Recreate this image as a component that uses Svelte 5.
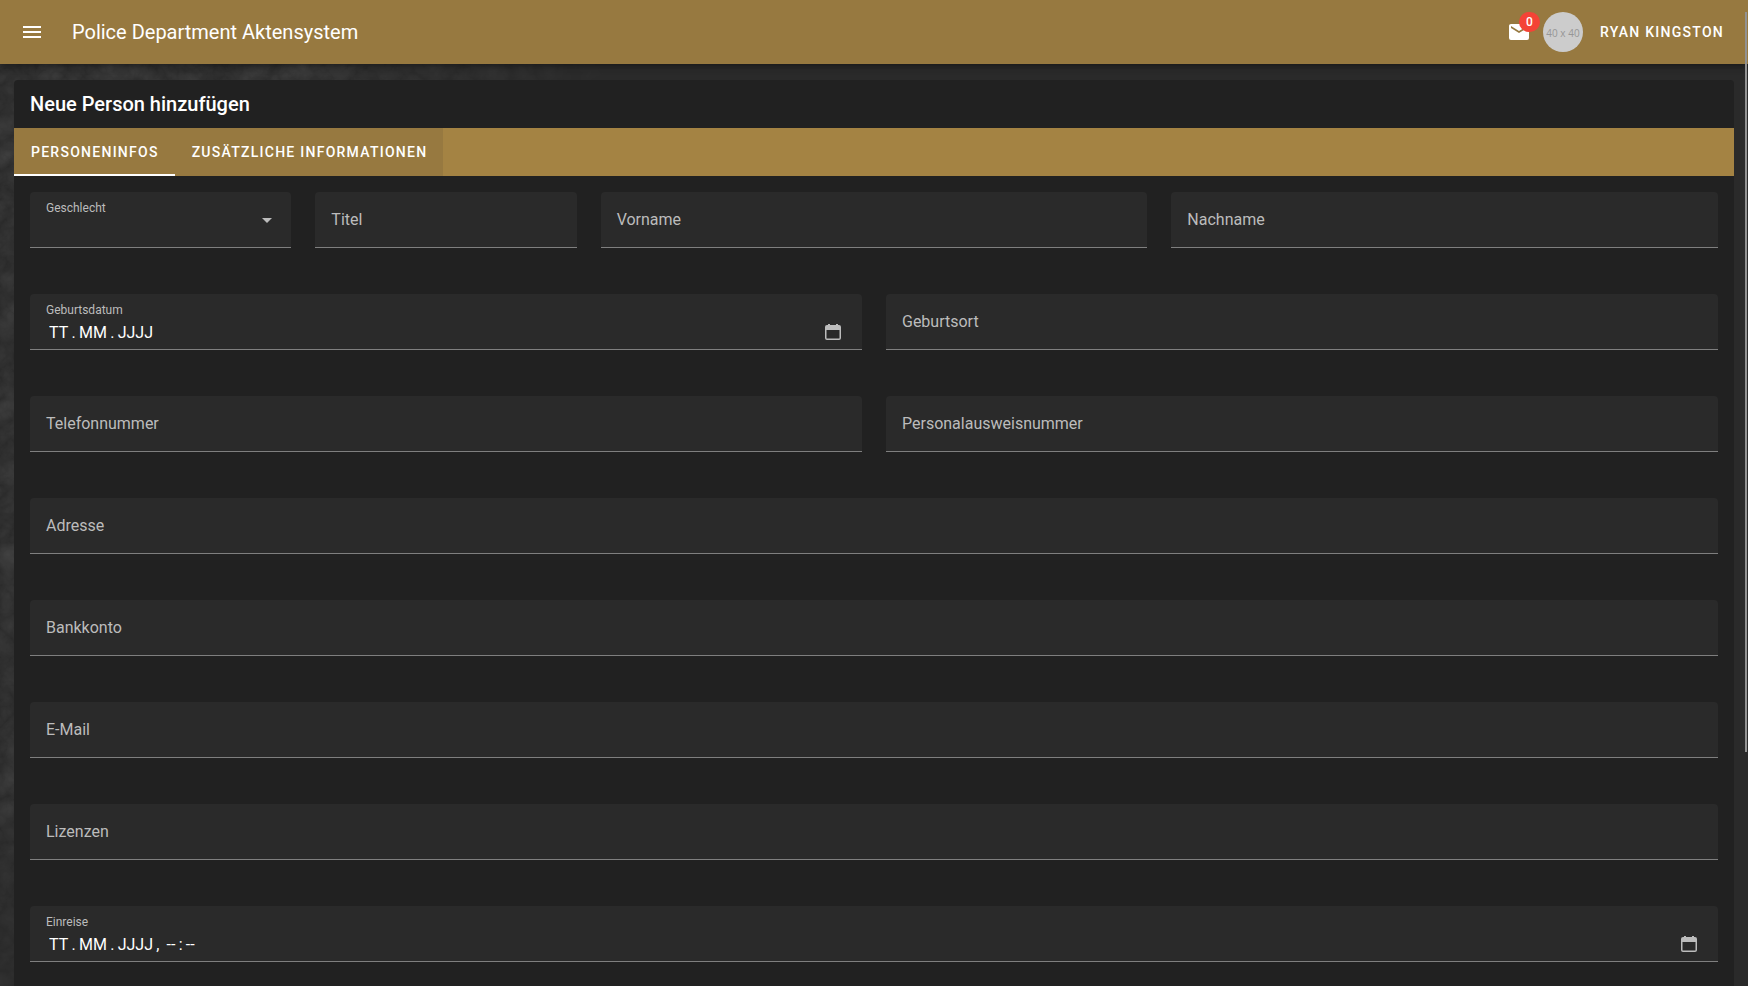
<script lang="ts">
    const tabs = ["Personeninfos", "Zusätzliche Informationen"];
    let activeTab = $state(0);
    let unread = $state(0);

    const fields = [
        { id: "gender", label: "Geschlecht", type: "select", size: "small" },
        { id: "title", label: "Titel", type: "text", size: "small" },
        { id: "firstname", label: "Vorname", type: "text", size: "medium" },
        { id: "lastname", label: "Nachname", type: "text", size: "medium" },
        { id: "birthdate", label: "Geburtsdatum", type: "date", size: "half", value: "TT\u2009.\u2009MM\u2009.\u2009JJJJ" },
        { id: "birthplace", label: "Geburtsort", type: "text", size: "half" },
        { id: "phone", label: "Telefonnummer", type: "text", size: "half" },
        { id: "idcard", label: "Personalausweisnummer", type: "text", size: "half" },
        { id: "address", label: "Adresse", type: "text", size: "full" },
        { id: "bank", label: "Bankkonto", type: "text", size: "full" },
        { id: "email", label: "E-Mail", type: "text", size: "full" },
        { id: "licenses", label: "Lizenzen", type: "text", size: "full" },
        { id: "entry", label: "Einreise", type: "date", size: "full", value: "TT\u2009.\u2009MM\u2009.\u2009JJJJ\u2009, \u2009--\u2009:\u2009--" },
    ];
</script>

<div class="app">
    <svg class="texture" aria-hidden="true">
        <defs>
            <filter id="grain" x="0" y="0" width="100%" height="100%">
                <feTurbulence type="turbulence" baseFrequency="0.035" numOctaves="4" seed="8" />
                <feColorMatrix values="0 0 0 0 1  0 0 0 0 1  0 0 0 0 1  0.12 0 0 0 0" />
            </filter>
            <radialGradient id="fade" cx="0" cy="0.3" r="1">
                <stop offset="0.4" stop-color="#fff" />
                <stop offset="0.95" stop-color="#000" />
            </radialGradient>
            <mask id="corner">
                <rect width="100%" height="100%" fill="url(#fade)" />
            </mask>
        </defs>
        <g mask="url(#corner)">
            <rect width="100%" height="100%" filter="url(#grain)" />
        </g>
    </svg>

    <header>
        <button class="icon-button" aria-label="Menü">
            <svg width="24" height="24" viewBox="0 0 24 24"><path d="M3,6H21V8H3V6M3,11H21V13H3V11M3,16H21V18H3V16Z" /></svg>
        </button>
        <div class="brand">Police Department Aktensystem</div>
        <button class="mail" aria-label="Nachrichten">
            <svg width="24" height="24" viewBox="0 0 24 24"><path d="M20,8L12,13L4,8V6L12,11L20,6M20,4H4C2.89,4 2,4.89 2,6V18A2,2 0 0,0 4,20H20A2,2 0 0,0 22,18V6C22,4.89 21.1,4 20,4Z" /></svg>
            <span class="badge">{unread}</span>
        </button>
        <div class="avatar">40 x 40</div>
        <button class="user">Ryan Kingston</button>
    </header>

    <main>
        <section class="card">
            <h1>Neue Person hinzufügen</h1>
            <div class="tabs" role="tablist">
                {#each tabs as tab, i}
                    <button class="tab" class:active={activeTab === i} role="tab" aria-selected={activeTab === i} onclick={() => (activeTab = i)}>{tab}</button>
                {/each}
            </div>
            <form>
                {#each fields as field}
                    <div class="field {field.size}" class:raised={field.type !== "text"}>
                        <label for={field.id}>{field.label}</label>
                        {#if field.type === "select"}
                            <select id={field.id}>
                                <option value=""></option>
                            </select>
                            <svg class="arrow" width="24" height="24" viewBox="0 0 24 24"><path d="M7,10L12,15L17,10H7Z" /></svg>
                        {:else}
                            <input id={field.id} type="text" value={field.value ?? ""} placeholder=" " autocomplete="off" />
                        {/if}
                        {#if field.type === "date"}
                            <button class="picker" type="button" aria-label="Datum wählen">
                                <svg width="16" height="16" viewBox="0 0 16 16"><path fill-rule="evenodd" d="M3 0H5V1H11V0H13V1H14Q16 1 16 3V14Q16 16 14 16H2Q0 16 0 14V3Q0 1 2 1H3ZM1.5 6V14Q1.5 14.5 2 14.5H14Q14.5 14.5 14.5 14V6Z" /></svg>
                            </button>
                        {/if}
                    </div>
                {/each}
            </form>
        </section>
    </main>
    <div class="scroll-thumb"></div>
</div>

<style>
    :global(body) {
        margin: 0;
        background-color: #2a2a2a;
    }

    .app {
        position: relative;
        display: flex;
        flex-direction: column;
        height: 100vh;
        overflow: hidden;
        color: #ffffff;
        font-family: Roboto, sans-serif;
        font-size: 16px;
    }

    button, input, select {
        margin: 0;
        padding: 0;
        border: 0;
        border-radius: 0;
        outline: none;
        background: none;
        color: inherit;
        font: inherit;
    }

    button {
        cursor: pointer;
    }

    svg {
        display: block;
        fill: currentColor;
    }

    .texture {
        position: absolute;
        top: 0;
        left: 0;
        width: 40%;
        height: 100%;
    }

    header {
        position: relative;
        display: flex;
        flex: none;
        align-items: center;
        height: 64px;
        padding: 0 8px 0 20px;
        background-color: #977940;
        box-shadow: 0 2px 4px -1px rgba(0, 0, 0, 0.2), 0 4px 5px rgba(0, 0, 0, 0.14), 0 1px 10px rgba(0, 0, 0, 0.12);
    }

    .brand {
        flex: 1;
        margin-left: 28px;
        font-size: 20px;
        line-height: 30px;
    }

    .mail {
        position: relative;
        margin-right: 12px;
    }

    .badge {
        position: absolute;
        left: 12px;
        bottom: 12px;
        min-width: 21px;
        height: 20px;
        border-radius: 10px;
        background-color: #f44336;
        font-size: 12px;
        font-weight: 500;
        line-height: 20px;
        text-align: center;
    }

    .avatar {
        width: 40px;
        height: 40px;
        margin-right: 1px;
        border-radius: 50%;
        background-color: #cccccc;
        color: #969696;
        font-family: "Open Sans", sans-serif;
        font-size: 10px;
        line-height: 42px;
        text-align: center;
        white-space: nowrap;
    }

    .user, .tab {
        padding: 0 16px;
        font-size: 14px;
        font-weight: 500;
        letter-spacing: 0.09em;
        text-transform: uppercase;
        white-space: nowrap;
    }

    main {
        position: relative;
        flex: 1;
        min-height: 0;
        padding: 16px 14px 0;
        overflow: hidden;
    }

    .card {
        min-height: 100%;
        border-radius: 4px 4px 0 0;
        background-color: #212121;
    }

    h1 {
        margin: 0;
        padding: 0 16px;
        font-size: 20px;
        font-weight: 500;
        line-height: 48px;
    }

    .tabs {
        display: flex;
        height: 48px;
        background-color: #a48343;
    }

    .tab {
        padding-left: 17px;
        background-color: #977940;
    }

    .tab.active {
        box-shadow: inset 0 -2px #ffffff;
    }

    form {
        display: grid;
        grid-template-columns: repeat(12, 1fr);
        gap: 46px 24px;
        padding: 16px;
    }

    .field {
        display: grid;
        grid-template-columns: 1fr auto;
        height: 55px;
        border-bottom: 1px solid #7f7f7f;
        border-radius: 4px 4px 0 0;
        background-color: #2a2a2a;
    }

    .small {
        grid-column: span 2;
    }

    .medium {
        grid-column: span 4;
    }

    .half {
        grid-column: span 6;
    }

    .full {
        grid-column: span 12;
    }

    label {
        grid-area: 1 / 1;
        padding-left: 16px;
        color: #bcbcbc;
        line-height: 56px;
        pointer-events: none;
    }

    .raised label,
    .field:focus-within label,
    .field:has(input:not(:placeholder-shown)) label {
        font-size: 12px;
        line-height: 32px;
    }

    input, select {
        grid-area: 1 / 1 / 2 / 3;
        width: 100%;
        min-width: 0;
        box-sizing: border-box;
        padding: 22px 16px 0 19px;
        appearance: none;
    }

    .arrow, .picker {
        grid-area: 1 / 2;
        color: #bcbcbc;
    }

    .arrow {
        margin: 16px 12px 0 0;
        pointer-events: none;
    }

    .picker {
        align-self: start;
        margin: 30px 21px 0 0;
    }

    .scroll-thumb {
        position: absolute;
        top: 12px;
        right: 1px;
        width: 2px;
        height: 75%;
        background-color: #929292;
    }
</style>
